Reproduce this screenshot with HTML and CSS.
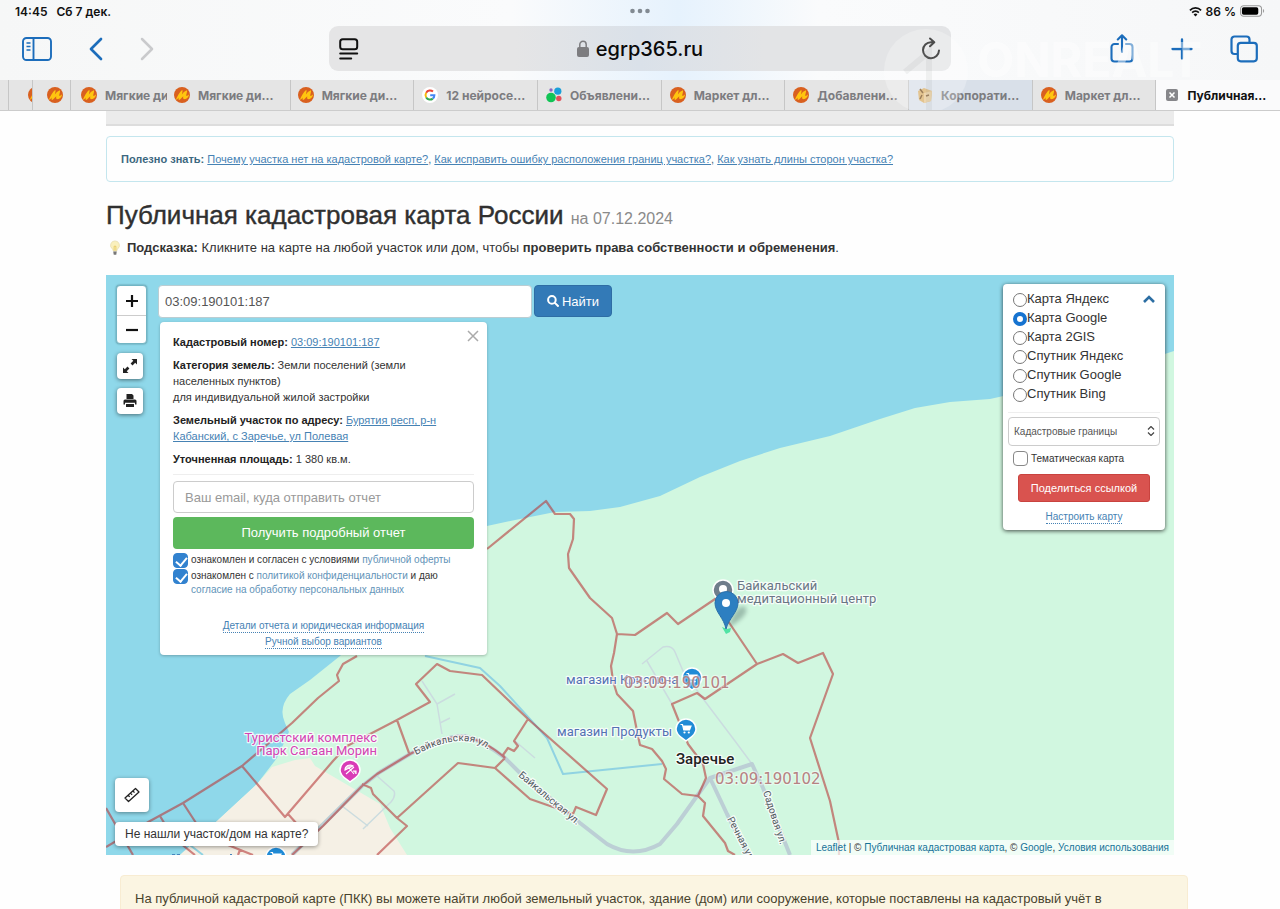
FILE: index.html
```html
<!DOCTYPE html>
<html lang="ru">
<head>
<meta charset="utf-8">
<meta name="viewport" content="width=device-width, initial-scale=1">
<title>Публичная кадастровая карта России</title>
<link rel="stylesheet" href="styles.css">
</head>
<body>
<svg class="defs" width="0" height="0" aria-hidden="true">
  <symbol id="fav-m" viewBox="0 0 16 16"><circle cx="8" cy="8" r="8" fill="#d9601f"/><path d="M1.800 12.800C3.500 9 5.500 5 8.300 2.800c.7 1.500-.3 3.300-.4 4.700C9.300 5.500 11 4 13 3.300c.4 2-1 4.200-.7 5.700 1-.2 1.900-.9 2.900-1.800-.5 3-2.700 5.300-5.200 4.900-1.200-.5-.9-1.900-.7-2.900-1.500 1.200-2.400 3.100-4.100 3.900-1-.5-.6-1.700-.3-2.700-.9.800-1.900 2.200-3.100 2.400z" fill="#ffc50f"/></symbol>
  <symbol id="cart" viewBox="0 0 12 12"><path d="M.5 1.500h2l1.300 5.500h5.700l1.500-4H3.500" fill="#fff" stroke="#fff" stroke-width="1.200"/><circle cx="4.500" cy="9.500" r="1.100" fill="#fff"/><circle cx="8.800" cy="9.500" r="1.100" fill="#fff"/></symbol>
</svg>

<header class="browser">
  <div class="status">
    <span class="status-side">14:45 <span class="date">Сб 7 дек.</span></span>
    <svg class="dots" viewBox="0 0 20 6" width="20" height="6"><g fill="#828a92"><circle cx="2.500" cy="3" r="2.300"/><circle cx="10" cy="3" r="2.300"/><circle cx="17.500" cy="3" r="2.300"/></g></svg>
    <span class="status-side status-right">
      <svg viewBox="0 0 14 11" width="13" height="11"><g fill="none" stroke="#111" stroke-width="1.900"><path d="M1 4.200a8.500 8.500 0 0 1 12 0M3.400 6.700a5 5 0 0 1 7.200 0"/></g><path d="M7 10.800 4.900 8.600a3 3 0 0 1 4.200 0z" fill="#111"/></svg>
      86 %
      <svg viewBox="0 0 26 12" width="25" height="12"><rect x=".6" y=".6" width="21.800" height="10.800" rx="3.200" fill="none" stroke="#999" stroke-width="1.100"/><rect x="2" y="2" width="17" height="8" rx="1.800" fill="#000"/><path d="M24 4v4c1.500-.6 1.500-3.400 0-4z" fill="#999"/></svg>
    </span>
  </div>
  <div class="toolbar">
    <div class="tools">
      <button class="tool" aria-label="Боковая панель"><svg viewBox="0 0 30 24" width="30" height="24" fill="none" stroke="#1c6dbb" stroke-width="1.900"><rect x="1" y="1" width="28" height="22" rx="3.500"/><path d="M11.500 1v22"/><path d="M4.500 6h4M4.500 9.500h4M4.500 13h4" stroke-width="1.300"/></svg></button>
      <button class="tool" aria-label="Назад"><svg viewBox="0 0 14 24" width="14" height="24" fill="none" stroke="#1c6dbb" stroke-width="2.700" stroke-linecap="round" stroke-linejoin="round"><path d="M12 2 2 12l10 10"/></svg></button>
      <button class="tool" aria-label="Вперёд"><svg viewBox="0 0 14 24" width="14" height="24" fill="none" stroke="#c9cacc" stroke-width="2.500" stroke-linecap="round" stroke-linejoin="round"><path d="m2 2 10 10L2 22"/></svg></button>
    </div>
    <div class="address">
      <button class="tool" aria-label="Режим чтения"><svg viewBox="0 0 20 22" width="20" height="22" fill="none" stroke="#111" stroke-width="2" stroke-linecap="round"><rect x="1.200" y="1.200" width="17" height="10" rx="2.500"/><path d="M1.200 15.500h17M1.200 20.500h11"/></svg></button>
      <span class="host"><svg viewBox="0 0 12 17" width="12" height="17"><rect x="0" y="7" width="12" height="10" rx="2" fill="#7d7d80"/><path d="M2.800 8V4.500a3.200 3.200 0 0 1 6.400 0V8" fill="none" stroke="#7d7d80" stroke-width="1.500"/></svg>egrp365.ru</span>
      <button class="tool" aria-label="Обновить"><svg viewBox="0 0 20 23" width="20" height="23" fill="none" stroke="#111" stroke-width="2" stroke-linecap="round" stroke-linejoin="round"><path d="M12 5.200H10A8 8 0 1 0 18 13.500M9 1.500l4.300 3.800L9 9.300"/></svg></button>
    </div>
    <div class="tools tools-right">
      <button class="tool" aria-label="Поделиться"><svg viewBox="0 0 24 29" width="24" height="29" fill="none" stroke="#1c6dbb" stroke-width="2.100" stroke-linecap="round" stroke-linejoin="round"><path d="M8 10H4.500A3 3 0 0 0 1.500 13v11.500a3 3 0 0 0 3 3h15a3 3 0 0 0 3-3V13a3 3 0 0 0-3-3H16M12 18V1.500M7.800 5.500 12 1.300l4.200 4.200"/></svg></button>
      <button class="tool" aria-label="Новая вкладка"><svg viewBox="0 0 22 22" width="22" height="22" fill="none" stroke="#1c6dbb" stroke-width="2.300" stroke-linecap="round"><path d="M11 1.500v19M1.500 11h19"/></svg></button>
      <button class="tool" aria-label="Все вкладки"><svg viewBox="0 0 28 28" width="28" height="28" fill="none" stroke="#1c6dbb" stroke-width="2.200" stroke-linejoin="round"><rect x="7.800" y="7.800" width="19" height="18.500" rx="3"/><path d="M7.500 19H4.500a3 3 0 0 1-3-3V4.500a3 3 0 0 1 3-3h12a3 3 0 0 1 3 3v3"/></svg></button>
    </div>
  </div>
  <nav class="tabs" aria-label="Вкладки">
    <span class="tab sliver-a"></span>
    <span class="tab sliver-b"><svg width="16" height="16"><use href="#fav-m"/></svg></span>
    <span class="tab sliver-c"><svg width="16" height="16"><use href="#fav-m"/></svg></span>
    <span class="tab sliver-d"><svg width="16" height="16"><use href="#fav-m"/></svg>Мягкие ди</span>
    <a class="tab narrow" href="#"><svg width="16" height="16"><use href="#fav-m"/></svg>Мягкие ди...</a>
    <a class="tab narrow" href="#"><svg width="16" height="16"><use href="#fav-m"/></svg>Мягкие ди...</a>
    <a class="tab" href="#"><svg width="16" height="16" viewBox="0 0 16 16"><circle cx="8" cy="8" r="8" fill="#fff"/><g fill="none" stroke-width="2"><path d="M11 4.600A4.500 4.500 0 0 0 4.200 5.700" stroke="#e94435"/><path d="M4.200 5.700a4.500 4.500 0 0 0 0 4.700" stroke="#f8bb0b"/><path d="M4.200 10.400a4.500 4.500 0 0 0 6.600 1.200" stroke="#34a853"/><path d="M10.800 11.600A4.500 4.500 0 0 0 12.400 8.200H8.200" stroke="#4285f4"/></g></svg>12 нейросе...</a>
    <a class="tab" href="#"><svg width="16" height="16" viewBox="0 0 16 16"><circle cx="5" cy="10.500" r="4.800" fill="#11c455"/><circle cx="11.800" cy="4.200" r="3.600" fill="#1a9fd9"/><circle cx="12.800" cy="11.500" r="2.700" fill="#e2505a"/><circle cx="5" cy="3" r="1.700" fill="#8a67c4"/></svg>Объявлени...</a>
    <a class="tab" href="#"><svg width="16" height="16"><use href="#fav-m"/></svg>Маркет дл...</a>
    <a class="tab" href="#"><svg width="16" height="16"><use href="#fav-m"/></svg>Добавлени...</a>
    <a class="tab tinted" href="#"><svg width="16" height="16" viewBox="0 0 16 16"><path d="m1 4 6-3 8 3-1 10-7 2-5-3z" fill="#d9b06b"/><path d="m7 6 8-2-1 10-7 2z" fill="#e8c994"/><path d="m3 2 3 4M9 9l3-1M5 8l-2 4" stroke="#7c5526" stroke-width="1.500"/></svg>Корпорати...</a>
    <a class="tab" href="#"><svg width="16" height="16"><use href="#fav-m"/></svg>Маркет дл...</a>
    <a class="tab active" href="#" aria-current="page"><svg width="12" height="12" viewBox="0 0 12 12"><rect width="12" height="12" rx="2" fill="#86868a"/><path d="m3.500 3.500 5 5m0-5-5 5" stroke="#fff" stroke-width="1.500"/></svg>Публичная...</a>
  </nav>
  <div class="watermark" aria-hidden="true">
    <svg viewBox="0 0 86 82" width="86" height="82"><circle cx="43" cy="43" r="42" fill="#fff" fill-opacity=".55"/><path d="M22 44 46 24V82" fill="none" stroke="#bbb" stroke-opacity=".4" stroke-width="6"/></svg>
    <span>ONREALT</span>
  </div>
</header>

<main class="page">
  <div class="strip"></div>
  <p class="notice"><b>Полезно знать:</b> <a href="#">Почему участка нет на кадастровой карте?</a>, <a href="#">Как исправить ошибку расположения границ участка?</a>, <a href="#">Как узнать длины сторон участка?</a></p>
  <h1 class="title">Публичная кадастровая карта России <small>на 07.12.2024</small></h1>
  <div class="hint"><svg viewBox="0 0 12 18" width="12" height="16"><path d="M6 1a5 5 0 0 0-3 9c.8.8.9 1.500 1 2.500h4c.1-1 .2-1.700 1-2.500A5 5 0 0 0 6 1z" fill="#faf0bd" stroke="#e6dcb0" stroke-width=".8"/><path d="M5 12V7h2v5" fill="none" stroke="#e3c14d" stroke-width=".8"/><path d="M4 13h4l-.6 3.500H4.600z" fill="#777"/></svg><p><b>Подсказка:</b> Кликните на карте на любой участок или дом, чтобы <b>проверить права собственности и обременения</b>.</p></div>

  <section class="map" aria-label="Кадастровая карта">
    <svg class="map-canvas" viewBox="106 274 1068 580" preserveAspectRatio="xMinYMin slice">
      <rect x="106" y="274" width="1068" height="580" fill="#8fd8ea"/>
      <path d="M1174 350 1140 361 1100 371 1030 389 990 398 950 401 915 407 880 418 830 435 780 447 740 460 700 476 660 495 620 506 590 510 555 511 520 518 487 525 440 545 400 590 340 655 310 679 290 693Q278 707 285 722L289 731 277 757 257 783 217 820 180 854H1174Z" fill="#d1f7e0"/>
      <path d="M272 766 295 759 310 757 315 765 380 803 390 827 407 854H180L217 820 257 783Z" fill="#f5f0e5"/>
      <g fill="none" stroke-linejoin="round">
        <path d="M425 655 480 667 500 685 547 737 563 773 662 763M182 838 203 854" stroke="#90d3e2" stroke-width="2"/>
        <g stroke="#cbdcdf" stroke-width="1.500"><path d="M422 680 437 703 442 733M437 703 455 693M440 722 450 717M377 775 394 790Q396 795 391 801L363 828M342 805 368 825M642 663 663 646Q672 644 675 651L683 670 704 699 735 740 752 763M647 660 672 703M515 740 535 757"/></g>
        <g stroke="#bccfd5" stroke-width="4"><path d="M292 854 362 785 380 771 410 753Q445 734 465 735 485 741 505 757L520 772 580 822 607 843Q633 858 660 843L677 823 697 795 710 777 752 763 763 787 790 854M710 777 727 813 748 854"/></g>
        <g stroke="#b83a3a" stroke-opacity=".6" stroke-width="2.200">
          <path d="M357 655 343 663 337 674 339 680 318 697 292 722 242 765 183 802 150 820 106 846M106 807 133 854M242 765 285 816 333 760 347 745 397 719 430 701 416 683 437 663 450 670 482 674 528 718 607 788 596 814 576 806 573 813 530 798 495 767 505 757M528 718 514 740 518 745 514 750 508 747 503 754 505 757M495 767 458 762 397 817 373 793 371 787 362 783M397 817 407 825 377 854M397 719 409 752M505 757Q485 739 461 735 440 737 410 753L377 773 362 785 323 825 292 854M288 813 297 823M183 802 198 825M160 815 166 825M180 842 195 854M228 844 253 854M240 849 238 854"/>
          <path d="M487 548 546 500 555 513 570 513 574 518 573 538 568 553 569 567 590 597 612 617 617 633 614 652 611 665 613 680 617 693 633 710 637 730 640 744 652 748 662 760 666 768 664 778 682 793 698 795 706 777 703 763 688 743 672 703 697 692 705 698 757 663 728 620M617 633 635 634 667 612 678 623 718 596M757 663 783 653 798 662 823 652 833 673 810 737 830 800 839 842V854M698 795 705 802 703 815 725 842 728 850 735 854"/>
        </g>
      </g>
      <g class="map-label">
        <g fill="#d345b3" font-size="13" text-anchor="end"><text x="377" y="741">Туристский комплекс</text><text x="377" y="754">Парк Сагаан Морин</text></g>
        <g fill="#6a7685" font-size="13"><text x="737" y="589">Байкальский</text><text x="737" y="602">медитационный центр</text></g>
        <g fill="#5471b4" font-size="13"><text x="566" y="683">магазин Кристина</text><text x="557" y="735">магазин Продукты</text></g>
        <text x="676" y="763" font-size="15" font-weight="500" fill="#222">Заречье</text>
        <g font-size="10" fill="#505a60">
          <path id="st1" d="M416 754Q461 730 486 747L510 764" fill="none" stroke="none"/>
          <text><textPath href="#st1">Байкальская ул.</textPath></text>
          <text transform="translate(518 775) rotate(40)">Байкальская ул.</text>
          <text transform="translate(763 791) rotate(72)">Садовая ул.</text>
          <text transform="translate(727 818) rotate(62)">Речная ул.</text>
        </g>
      </g>
      <g stroke="#fff" stroke-width="1.500">
        <path d="M350 781c-3-3-10-5-10-12a10 10 0 0 1 20 0c0 7-7 9-10 12z" fill="#d93bb7"/>
        <path d="M692 689c-3-3-10-5-10-12a10 10 0 0 1 20 0c0 7-7 9-10 12z" fill="#208bd6"/>
        <path d="M686 740c-3-3-10-5-10-12a10 10 0 0 1 20 0c0 7-7 9-10 12z" fill="#208bd6"/>
        <path d="M276 868c-3-3-10-5-10-12a10 10 0 0 1 20 0c0 7-7 9-10 12z" fill="#208bd6"/>
        <path d="M723 603c-3-3-10-7-10-14a10 10 0 0 1 20 0c0 7-7 11-10 14z" fill="#6f7d8b"/>
      </g>
      <path d="M345 769a5 5 0 0 1 8-4zM349 767l5 6M346 773l8-7M353 770h3v3" fill="#fff" stroke="#fff" stroke-width="1.100" fill-opacity=".7"/>
      <use href="#cart" x="686" y="671" width="12" height="12"/>
      <use href="#cart" x="680" y="722" width="12" height="12"/>
      <use href="#cart" x="270" y="850" width="12" height="12"/>
      <g class="cadastral"><text x="624" y="687">03:09:190101</text><text x="715" y="783">03:09:190102</text></g>
      <circle cx="723" cy="588" r="4" fill="#fff"/>
      <path d="M172 854h3m2 0h3m51-1v2" stroke="#4785bd" stroke-width="2"/>
      <path d="M728 627Q734 606 744 605 753 612 728 627z" fill="#3a5550" opacity=".35" class="soft"/>
      <path d="m722 626 5 2 4-1-1 4-4 2z" fill="#50e3a4"/>
      <path d="M726 628C724 617 715 611 715 602a11.500 11.500 0 0 1 23 0c0 9-9 15-12 26z" fill="#2d7fc1" stroke="#2a6fa9"/>
      <circle cx="726" cy="602" r="4" fill="#fff"/>
    </svg>

    <div class="map-top">
      <div class="controls">
        <div class="zoom">
          <button aria-label="Приблизить"><svg viewBox="0 0 12 12" width="12" height="12" stroke="#111" stroke-width="2.200"><path d="M6 0v12M0 6h12"/></svg></button>
          <button aria-label="Отдалить"><svg viewBox="0 0 12 12" width="12" height="12" stroke="#111" stroke-width="2.200"><path d="M0 6h12"/></svg></button>
        </div>
        <button class="square" aria-label="Во весь экран"><svg viewBox="0 0 14 14" width="14" height="14"><path d="M8.500 0H14v5.500L12.200 3.700 9.500 6.400 7.600 4.500l2.700-2.700zM0 8.500V14h5.500L3.700 12.200 6.400 9.500 4.500 7.600 1.800 10.300z" fill="#222"/></svg></button>
        <button class="square" aria-label="Печать"><svg viewBox="0 0 14 14" width="14" height="14" fill="#222"><path d="M3.500 0H9l1.500 1.500V5h-7zM2 5.500h10a1.500 1.500 0 0 1 1.500 1.500v3.500H12V8.800H2v1.700H.5V7A1.500 1.500 0 0 1 2 5.500zM3 10h8v3H3z"/></svg></button>
      </div>
      <div class="finder">
        <form class="search">
          <input type="text" aria-label="Кадастровый номер или адрес" value="03:09:190101:187">
          <button type="button"><svg viewBox="0 0 12 12" width="12" height="12" fill="none" stroke="#fff" stroke-width="2"><circle cx="4.900" cy="4.900" r="3.800"/><path d="m7.600 7.600 4 4"/></svg>Найти</button>
        </form>
        <article class="popup">
          <button class="close" aria-label="Закрыть"><svg viewBox="0 0 12 12" width="12" height="12" stroke="#aaa" stroke-width="1.500"><path d="m1 1 10 10M11 1 1 11"/></svg></button>
          <p><b>Кадастровый номер:</b> <a href="#">03:09:190101:187</a></p>
          <p><b>Категория земель:</b> Земли поселений (земли<br>населенных пунктов)<br>для индивидуальной жилой застройки</p>
          <p><b>Земельный участок по адресу:</b> <a href="#">Бурятия респ, р-н<br>Кабанский, с Заречье, ул Полевая</a></p>
          <p><b>Уточненная площадь:</b> 1 380 кв.м.</p>
          <form class="order">
            <input class="email" type="email" aria-label="Email" placeholder="Ваш email, куда отправить отчет">
            <button class="submit" type="button">Получить подробный отчет</button>
            <div class="agree"><input type="checkbox" id="offer" checked><label for="offer">ознакомлен и согласен с условиями <a href="#">публичной оферты</a></label></div>
            <div class="agree"><input type="checkbox" id="privacy" checked><label for="privacy">ознакомлен с <a href="#">политикой конфиденциальности</a> и даю<br><a href="#">согласие на обработку персональных данных</a></label></div>
          </form>
          <div class="more"><a href="#">Детали отчета и юридическая информация</a><a href="#">Ручной выбор вариантов</a></div>
        </article>
      </div>
      <aside class="layers">
        <div class="bases">
          <label><input type="radio" name="base">Карта Яндекс</label>
          <label><input type="radio" name="base" checked>Карта Google</label>
          <label><input type="radio" name="base">Карта 2GIS</label>
          <label><input type="radio" name="base">Спутник Яндекс</label>
          <label><input type="radio" name="base">Спутник Google</label>
          <label><input type="radio" name="base">Спутник Bing</label>
        </div>
        <button class="collapse" aria-label="Свернуть"><svg viewBox="0 0 12 8" width="12" height="8" fill="none" stroke="#2c6ea3" stroke-width="2.600"><path d="m1 7 5-5 5 5"/></svg></button>
        <div class="select-box">
          <select aria-label="Слой"><option>Кадастровые границы</option></select>
          <svg viewBox="0 0 8 10" width="8" height="10" fill="none" stroke="#444" stroke-width="1.200"><path d="m1 3.500 3-3 3 3M1 6.500l3 3 3-3"/></svg>
        </div>
        <label class="theme"><input type="checkbox">Тематическая карта</label>
        <button class="share" type="button">Поделиться ссылкой</button>
        <a class="setup" href="#">Настроить карту</a>
      </aside>
    </div>
    <div class="map-bottom">
      <div class="helpers">
        <button class="ruler" aria-label="Линейка"><svg viewBox="0 0 16 16" width="16" height="16" fill="none" stroke="#222" stroke-width="1.300" stroke-linejoin="round"><path d="M1 11 11.500 1.500 15 5 4.500 14.500zM4.200 8.300l1.500 1.600M6.600 6.100l1.500 1.600M9 4l1.500 1.600"/></svg></button>
        <button class="missing">Не нашли участок/дом на карте?</button>
      </div>
      <p class="attribution"><a href="#">Leaflet</a> | © <a href="#">Публичная кадастровая карта</a>, © <a href="#">Google</a>, <a href="#">Условия использования</a></p>
    </div>
  </section>

  <p class="about">На публичной кадастровой карте (ПКК) вы можете найти любой земельный участок, здание (дом) или сооружение, которые поставлены на кадастровый учёт в</p>
</main>
</body>
</html>
```

FILE: styles.css
```css
* { box-sizing: border-box; }
html { overflow: hidden; }
body { margin: 0; background: #fefefe; color: #333; font-family: "Liberation Sans", Arial, sans-serif; font-size: 13px; }
button { margin: 0; padding: 0; border: 0; background: none; color: inherit; font: inherit; }
input, select { margin: 0; font: inherit; }
p { margin: 0; }
svg { display: block; flex: none; }
a { color: #4682b4; }
.defs { position: absolute; }

/* Browser chrome */
.browser { position: relative; background: linear-gradient(90deg, #f6f7f7 0%, #fafbfc 40%, #e6f2fd 53%, #fafbfc 64%, #f6f7f8 100%); font-family: Inter, sans-serif; overflow: hidden; }
.status { display: flex; align-items: center; height: 22px; padding: 0 15px; color: #111; font-size: 12px; font-weight: 600; }
.status-side { flex: 1; display: flex; align-items: center; gap: 9px; }
.status-right { justify-content: flex-end; gap: 4px; }
.toolbar { display: flex; align-items: center; height: 58px; padding: 4px 22px 9px; }
.tools { flex: 1; display: flex; align-items: center; gap: 37px; }
.tools-right { justify-content: flex-end; }
.address { flex: 0 1 622px; display: flex; align-items: center; justify-content: space-between; height: 45px; padding: 0 10px; border-radius: 9px; background: linear-gradient(90deg, #e5e5e6 30%, #dae1e9 50%, #e3e4e6 70%); }
.host { display: flex; align-items: center; gap: 7px; color: #0a0a0a; font-size: 20px; font-weight: 500; }
.tabs { display: flex; height: 31px; border-bottom: 1px solid #ccc; background: #e5e5e5; }
.tab { flex: 1 1 60px; min-width: 0; display: flex; align-items: center; gap: 8px; padding-left: 8px; border-right: 1px solid #c6c6c6; color: #7c7c80; font-size: 12px; font-weight: 700; text-decoration: none; white-space: nowrap; overflow: hidden; }
.sliver-a { flex: 0 0 9px; }
.sliver-b { flex: 0 0 24px; padding-left: 19px; }
.sliver-c { flex: 0 0 38px; padding-left: 14px; }
.sliver-d { flex: 0 0 96px; padding-left: 10px; border-right: 0; }
.narrow { padding-left: 7px; }
.tinted { background: #d9e0e9; }
.active { padding-left: 10px; gap: 9px; border-right: 0; background: #fafafb; color: #111; }
.watermark { position: absolute; top: 28px; left: 69%; display: flex; align-items: flex-start; gap: 8px; color: #fff; font-size: 48px; font-weight: 700; line-height: 50px; opacity: .45; pointer-events: none; }
.watermark span { margin-top: 7px; }

/* Page */
.page { padding: 0 106px; }
.strip { height: 15px; border-bottom: 2px solid #ddd; background: #ebebeb; }
.notice { margin-top: 10px; padding: 14px; border: 1px solid #c4e6ee; border-radius: 4px; color: #3c6880; font-size: 11px; line-height: 16px; }
.title { margin: 19px 0 0; font-size: 26px; font-weight: 400; line-height: 28px; color: #303030; -webkit-text-stroke: 0.4px #303030; }
.title small { color: #8a8a8a; font-size: 16px; -webkit-text-stroke: 0; }
.hint { display: flex; align-items: center; gap: 6px; margin: 6px 0 18px 3px; font-size: 13px; line-height: 18px; }
.about { margin: 20px -14px 0 14px; padding: 14px; border: 1px solid #f8ecd2; border-radius: 4px; background: #fbf5e2; color: #48432d; font-size: 13px; line-height: 18px; }

/* Map */
.map { position: relative; display: flex; flex-direction: column; justify-content: space-between; min-height: 580px; overflow: hidden; }
.map-canvas { position: absolute; inset: 0; width: 100%; height: 100%; }
.map-top, .map-bottom { position: relative; display: flex; }
.map-top { padding: 9px 9px 0 10px; }
.map-label { font-family: Roboto, sans-serif; }
.map-label text, .cadastral text { stroke: #fff; stroke-opacity: .8; stroke-width: 2.5px; stroke-linejoin: round; paint-order: stroke; }
.cadastral { fill: #b68282; font-family: "DejaVu Sans", sans-serif; font-size: 15px; }
.cadastral text { stroke-opacity: .45; }
.soft { filter: blur(2px); }
.controls { display: flex; flex-direction: column; gap: 9px; width: 31px; margin: 1px 11px 0 0; }
.zoom { border: 1px solid #72b5c4; border-radius: 4px; background: #fff; box-shadow: 0 0 2px #4c8390; }
.zoom button { display: grid; place-items: center; width: 100%; height: 29px; }
.zoom button + button { height: 28px; border-top: 1px solid #ccc; }
.square { display: grid; place-items: center; width: 26px; height: 26px; margin-left: 1px; border-radius: 4px; background: #fff; box-shadow: 0 1px 4px rgba(0, 0, 0, .5); }
.finder { flex: 0 1 454px; }
.search { display: flex; gap: 2px; margin-top: 1px; }
.search input { flex: 1; min-width: 0; height: 33px; padding: 0 6px; border: 1px solid #bbcdd2; border-radius: 4px; background: #fff; color: #555; font-size: 13px; }
.search button { display: flex; align-items: center; justify-content: center; gap: 3px; width: 78px; height: 32px; border: 1px solid #2e6da4; border-radius: 4px; background: #337ab7; color: #fff; font-size: 13px; }
.popup { position: relative; width: 327px; margin: 4px 0 0 2px; padding: 12px 13px 6px; border-radius: 4px; background: #fff; box-shadow: 0 1px 3px rgba(0, 0, 0, .25); font-size: 11px; line-height: 16px; }
.popup p { margin-bottom: 7px; }
.popup b { color: #222; }
.close { position: absolute; top: 8px; right: 8px; }
.order { margin-top: 7px; padding-top: 6px; border-top: 1px solid #eee; }
.email { display: block; width: 100%; height: 32px; padding: 0 11px; border: 1px solid #ccc; border-radius: 4px; font-size: 13px; }
.email::placeholder { color: #999; }
.submit { width: 100%; height: 32px; margin: 4px 0 4px; border-radius: 4px; background: #5cb85c; color: #fff; font-size: 13px; }
.agree { display: flex; gap: 3px; margin-bottom: 1px; font-size: 10px; line-height: 14px; }
.agree a { color: #6293b8; text-decoration: none; }
.agree input, .theme input { appearance: none; flex: none; width: 15px; height: 15px; border: 1px solid #888; border-radius: 4px; background: #fff; }
.agree input:checked { position: relative; border-color: #3282cf; background: #3282cf; }
.agree input:checked::after { content: ""; position: absolute; left: 4px; top: 1px; width: 5px; height: 9px; border: solid #fff; border-width: 0 2px 2px 0; transform: rotate(40deg); }
.more { display: flex; flex-direction: column; align-items: center; gap: 2px; margin-top: 22px; font-size: 10px; line-height: 13px; }
.more a, .setup { border-bottom: 1px dotted #4682b4; text-decoration: none; }
.layers { position: relative; width: 162px; margin-left: auto; padding: 5px; border-radius: 4px; background: #fff; box-shadow: 0 1px 4px rgba(0, 0, 0, .7); align-self: flex-start; }
.bases { padding: 0 0 9px 5px; border-bottom: 1px solid #eee; }
.bases label { display: flex; align-items: center; height: 19px; font-size: 13px; }
.bases input { appearance: none; width: 14px; height: 14px; margin-top: 3px; border: 1px solid #777; border-radius: 50%; background: #fff; }
.bases input:checked { border: 4px solid #1673d0; }
.collapse { position: absolute; top: 11px; right: 10px; }
.select-box { position: relative; margin-top: 4px; }
.select-box select { appearance: none; width: 100%; height: 29px; padding: 0 5px; border: 1px solid #ccc; border-radius: 4px; background: #fff; color: #555; font-size: 10px; }
.select-box svg { position: absolute; top: 9px; right: 5px; }
.theme { display: flex; align-items: center; gap: 3px; margin: 5px 0 8px 5px; font-size: 10px; }
.share { display: block; width: 132px; height: 28px; margin: 0 auto 8px; border: 1px solid #c9433f; border-radius: 3px; background: #d9534f; color: #fff; font-size: 11px; }
.setup { display: block; width: max-content; margin: 0 auto 1px; font-size: 10px; line-height: 13px; }
.map-bottom { align-items: flex-end; justify-content: space-between; }
.helpers { display: flex; flex-direction: column; align-items: flex-start; gap: 10px; padding: 0 0 9px 9px; }
.ruler { display: grid; place-items: center; width: 34px; height: 34px; border-radius: 4px; background: #fff; box-shadow: 0 1px 4px rgba(0, 0, 0, .4); }
.missing { height: 24px; padding: 0 10px; border-radius: 4px; background: #fff; box-shadow: 0 1px 4px rgba(0, 0, 0, .4); font-size: 12px; white-space: nowrap; }
.attribution { padding: 0 5px; background: rgba(255, 255, 255, .7); font-size: 10px; line-height: 15px; white-space: nowrap; }
.attribution a { color: #177398; text-decoration: none; }
```
